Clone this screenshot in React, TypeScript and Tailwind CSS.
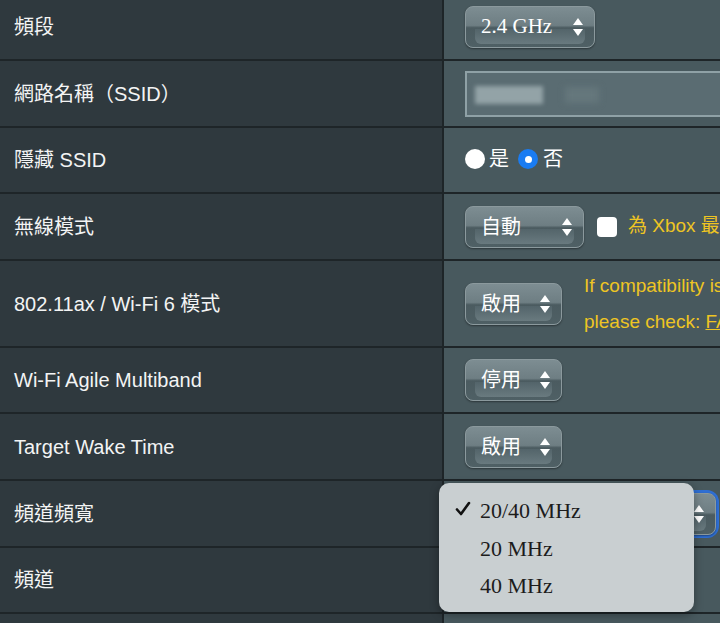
import React from "react";

const sans = "font-['Liberation_Sans','Noto_Sans_CJK_TC',sans-serif]";
const serif = "font-['Liberation_Serif','Noto_Sans_CJK_TC',serif]";

function Arrows() {
  return (
    <svg width="10" height="18" viewBox="0 0 10 18" className="shrink-0">
      <path d="M5 0 L10 7 H0 Z" fill="#fff" />
      <path d="M0 11 H10 L5 18 Z" fill="#fff" />
    </svg>
  );
}

// glossy ASUS-style select box
function GlossSelect({
  label,
  className,
  labelClass,
}: {
  label: string;
  className: string;
  labelClass: string;
}) {
  return (
    <div
      className={`relative flex h-[42px] shrink-0 items-center justify-between rounded-[8px] border border-[#8b999d] bg-[linear-gradient(180deg,#7d8d92_0%,#6e7e83_46%,#4b5b60_52%,#4f6065_100%)] pl-[15px] pr-[11px] shadow-[0_1px_2px_rgba(0,0,0,0.4)] ${className}`}
    >
      <div className="absolute inset-x-[9px] bottom-[3px] h-[15px] rounded-b-[6px] bg-[linear-gradient(180deg,#53646a,#697a7f)]" />
      <span className={`relative text-white ${labelClass}`}>{label}</span>
      <span className="relative flex">
        <Arrows />
      </span>
    </div>
  );
}

function Row({
  label,
  h,
  children,
}: {
  label: string;
  h: string;
  children?: React.ReactNode;
}) {
  return (
    <div className={`flex border-b-2 border-[#1e2528] ${h}`}>
      <div className="flex w-[444px] shrink-0 items-center border-r-2 border-[#1e2528] bg-[#2f393e] pl-[14px] text-[20px] text-[#f3f4f4]">
        {label}
      </div>
      <div className="flex min-w-0 flex-1 items-center gap-[13px] bg-[#48595e] pl-[21px] whitespace-nowrap">
        {children}
      </div>
    </div>
  );
}

export default function App() {
  return (
    <div className={`relative h-[623px] w-[720px] overflow-hidden bg-[#2f393e] ${sans}`}>
      <div className="mt-[-5px] flex flex-col">
        <Row label="頻段" h="h-[66px]">
          <GlossSelect label="2.4 GHz" className="w-[130px]" labelClass={`${serif} text-[21px]`} />
        </Row>

        <Row label="網路名稱（SSID）" h="h-[67px]">
          <div className="relative h-[46px] w-[300px] shrink-0 border-2 border-[#8fa1a6] bg-[#5a6c72]">
            <div className="absolute left-[8px] top-[13px] h-[18px] w-[68px] bg-[#93a3a7] blur-[2px]" />
            <div className="absolute left-[98px] top-[14px] h-[16px] w-[34px] bg-[#65777c] blur-[3px]" />
          </div>
        </Row>

        <Row label="隱藏 SSID" h="h-[66px]">
          <div className="-mt-[2px] flex items-center text-[20px] text-white">
            <span className="h-[20px] w-[20px] rounded-full bg-white" />
            <span className="ml-[4px]">是</span>
            <span className="ml-[9px] flex h-[20px] w-[20px] items-center justify-center rounded-full bg-[#1a7cf2]">
              <span className="h-[7px] w-[7px] rounded-full bg-white" />
            </span>
            <span className="ml-[5px]">否</span>
          </div>
        </Row>

        <Row label="無線模式" h="h-[67px]">
          <GlossSelect label="自動" className="w-[119px]" labelClass="text-[20px]" />
          <span className="h-[20px] w-[20px] shrink-0 rounded-[4px] bg-white" />
          <span className="-ml-[2px] text-[19px] text-[#eec523]">為 Xbox 最佳化</span>
        </Row>

        <Row label="802.11ax / Wi-Fi 6 模式" h="h-[87px]">
          <GlossSelect label="啟用" className="w-[97px]" labelClass="text-[20px]" />
          <div className="ml-[9px] flex flex-col text-[19px] leading-[36px] text-[#eec523]">
            <span>If compatibility issue occurs when enabling 802.11ax / Wi-Fi 6 mode,</span>
            <span>
              please check: <span className="underline">FAQ</span>
            </span>
          </div>
        </Row>

        <Row label="Wi-Fi Agile Multiband" h="h-[66px]">
          <GlossSelect label="停用" className="w-[97px]" labelClass="text-[20px]" />
        </Row>

        <Row label="Target Wake Time" h="h-[67px]">
          <GlossSelect label="啟用" className="w-[97px]" labelClass="text-[20px]" />
        </Row>

        <Row label="頻道頻寬" h="h-[67px]">
          <div className="rounded-[9px] ring-3 ring-[#2f6fd3]">
            <GlossSelect label="" className="w-[251px]" labelClass={`${serif} text-[21px]`} />
          </div>
        </Row>

        <Row label="頻道" h="h-[66px]" />

        <Row label="擴充頻道" h="h-[66px]" />
      </div>

      {/* open option list of the channel bandwidth select */}
      <div
        className={`absolute left-[439px] top-[483px] flex h-[129px] w-[255px] flex-col rounded-[10px] bg-[#c9cfd1] pt-[9px] shadow-[0_3px_10px_rgba(0,0,0,0.35)] ${serif} text-[22px] text-[#1c1c1c]`}
      >
        {["20/40 MHz", "20 MHz", "40 MHz"].map((opt, i) => (
          <div key={opt} className="relative flex h-[37.5px] items-center pl-[41px]">
            {i === 0 && (
              <svg
                width="16"
                height="16"
                viewBox="0 0 16 16"
                className="absolute left-[16px] top-[9px]"
              >
                <path
                  d="M2 8.5 L6 13 L14 2"
                  fill="none"
                  stroke="#111"
                  strokeWidth="2.6"
                  strokeLinecap="round"
                  strokeLinejoin="round"
                />
              </svg>
            )}
            {opt}
          </div>
        ))}
      </div>
    </div>
  );
}
